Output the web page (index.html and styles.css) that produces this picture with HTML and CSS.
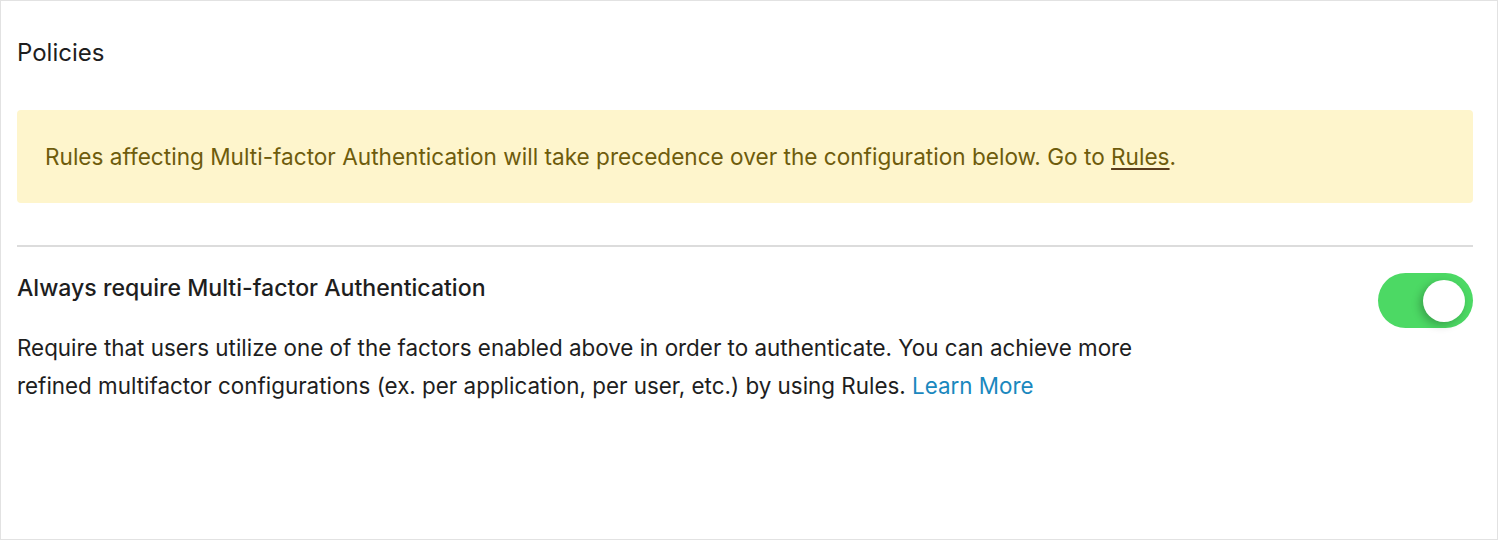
FILE: index.html
```html
<!DOCTYPE html>
<html>
<head>
<meta charset="utf-8">
<link rel="stylesheet" href="styles.css">
</head>
<body>
<div class="panel">
  <h2 class="title">Policies</h2>
  <div class="notice">Rules affecting Multi-factor Authentication will take precedence over the configuration below. Go to <a class="notice-link" href="#">Rules</a>.</div>
  <hr class="divider">
  <div class="setting">
    <div class="setting-text">
      <h3 class="setting-title">Always require Multi-factor Authentication</h3>
      <p class="setting-desc">Require that users utilize one of the factors enabled above in order to authenticate. You can achieve more refined multifactor configurations (ex. per application, per user, etc.) by using Rules. <a class="learn" href="#">Learn More</a></p>
    </div>
    <div class="toggle on"><span class="knob"></span></div>
  </div>
</div>
</body>
</html>
```
FILE: styles.css
```css
html, body {
  margin: 0;
  padding: 0;
  background: #fff;
}
.panel {
  box-sizing: border-box;
  width: 1498px;
  height: 540px;
  border: 1px solid #e2e2e2;
  padding: 37px 24px 0 16px;
  font-family: Inter, "Noto Sans", sans-serif;
  color: #1e1e1e;
}
.title {
  margin: 0;
  font-size: 24px;
  line-height: 30px;
  font-weight: 400;
}
.notice {
  margin-top: 42px;
  background: #fef5cc;
  border-radius: 4px;
  padding: 30px 28px;
  font-size: 22.6px;
  line-height: 33px;
  color: #6e5c0c;
}
.notice-link {
  color: #6e5c0c;
  text-decoration: underline;
  text-decoration-color: #5a3b1c;
  text-underline-offset: 3px;
}
.divider {
  margin: 42px 0 0;
  border: 0;
  height: 2px;
  background: #dcdcdc;
}
.setting {
  display: flex;
  justify-content: space-between;
  align-items: flex-start;
  margin-top: 26px;
}
.setting-title {
  margin: 0;
  font-size: 23.1px;
  line-height: 30px;
  font-weight: 500;
}
.setting-desc {
  margin: 26px 0 0;
  width: 1150px;
  font-size: 22.4px;
  line-height: 38px;
  color: #1e1e1e;
}
.learn {
  color: #1a88be;
  text-decoration: none;
}
.toggle {
  position: relative;
  width: 95px;
  height: 55px;
  border-radius: 28px;
  background: #4cd964;
  flex-shrink: 0;
}
.knob {
  position: absolute;
  top: 7px;
  right: 8px;
  width: 42px;
  height: 42px;
  border-radius: 50%;
  background: #fff;
  box-shadow: -3px 3px 8px rgba(0, 0, 0, 0.25);
}
```
